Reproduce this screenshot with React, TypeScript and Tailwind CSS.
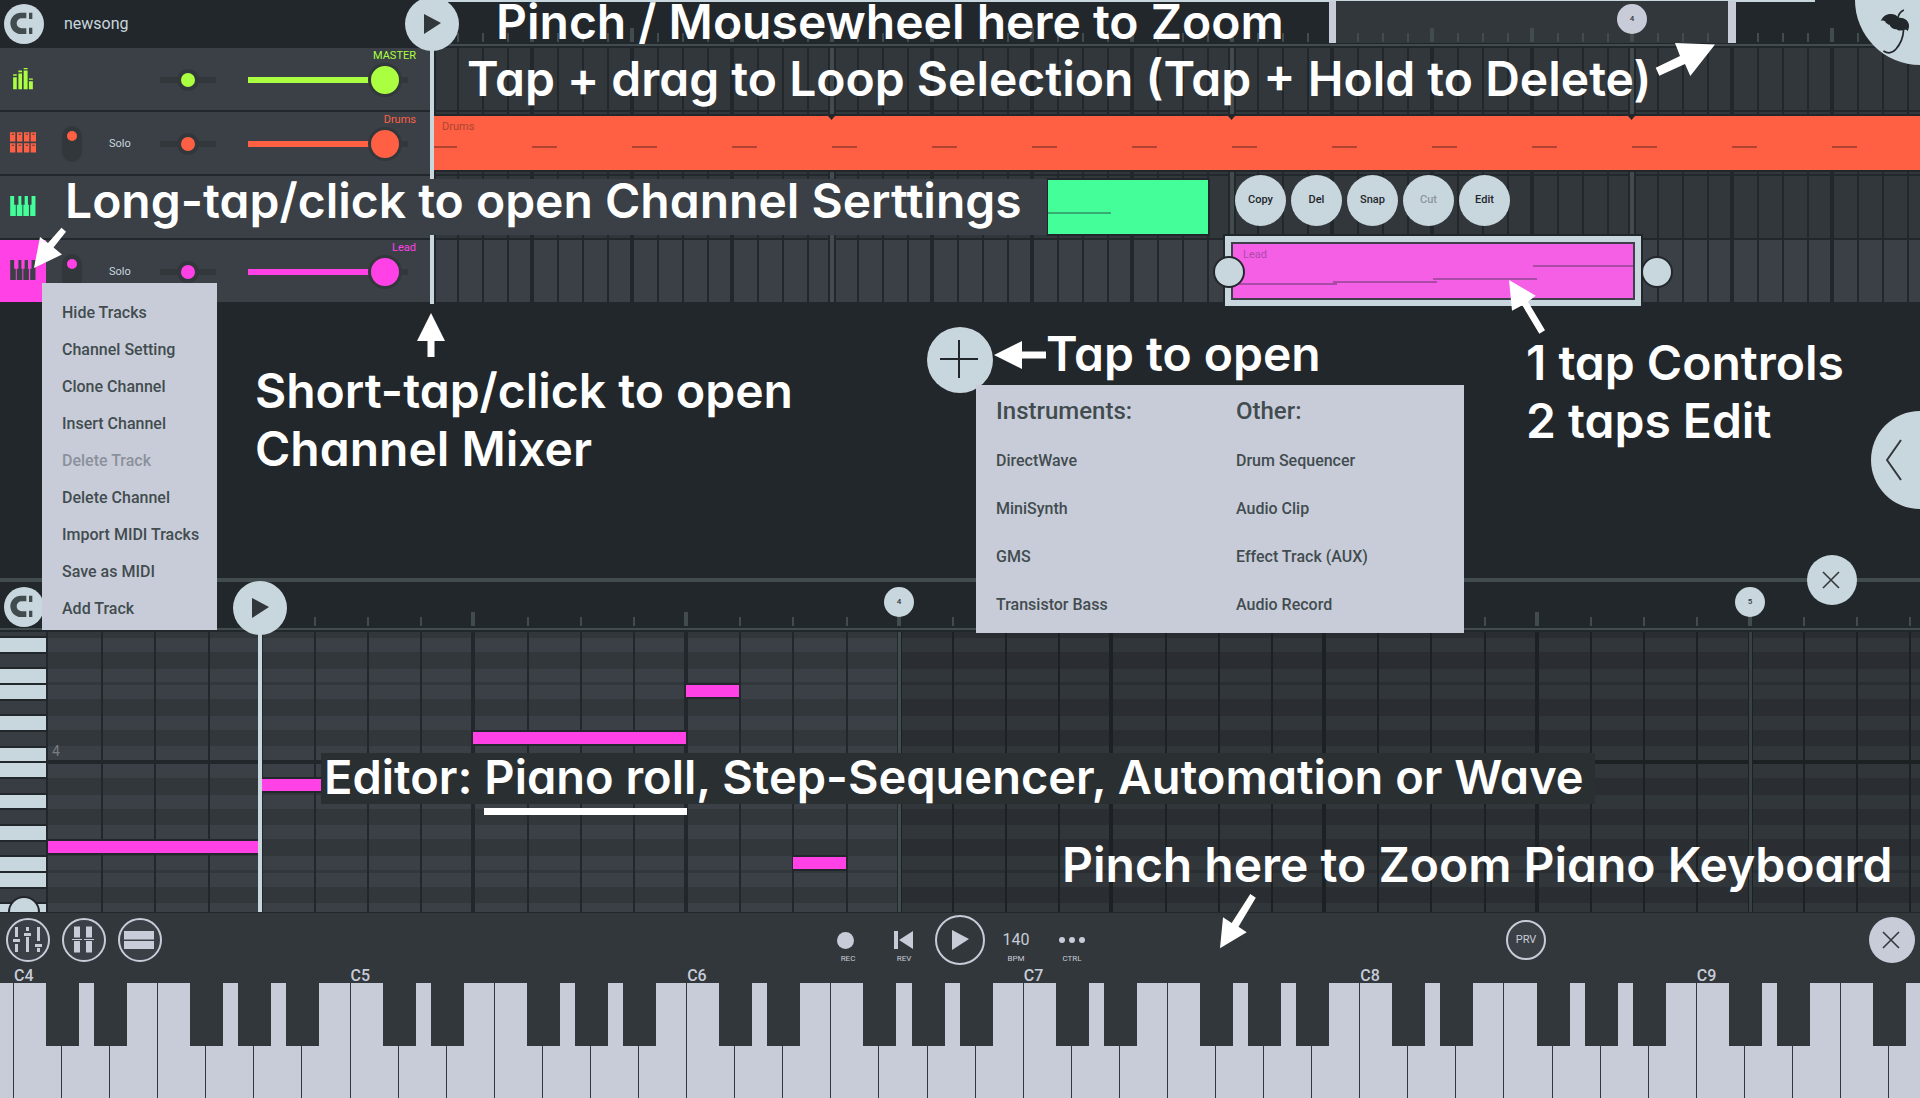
import type { ReactNode } from "react";
import clsx from "clsx";

type LaneColor = "lime" | "orange" | "green" | "pink";

const textColor: Record<LaneColor, string> = {
  lime: "text-[#aaff41]",
  orange: "text-[#ff6044]",
  green: "text-[#44ff99]",
  pink: "text-[#ff41e6]",
};

const channelMenu = [
  "Hide Tracks",
  "Channel Setting",
  "Clone Channel",
  "Insert Channel",
  "Delete Track",
  "Delete Channel",
  "Import MIDI Tracks",
  "Save as MIDI",
  "Add Track",
];

const modules = [
  { title: "Instruments:", items: ["DirectWave", "MiniSynth", "GMS", "Transistor Bass"] },
  { title: "Other:", items: ["Drum Sequencer", "Audio Clip", "Effect Track (AUX)", "Audio Record"] },
];

// Piano roll rows from G down to D, top to bottom
const pitchRows = ["G", "F#", "F", "E", "D#", "D", "C#", "C", "B", "A#", "A", "G#", "G", "F#", "F", "E", "D#", "D"];

const notes = [
  { row: 13, step: 0, length: 4 },
  { row: 9, step: 4, length: 2 },
  { row: 6, step: 8, length: 4 },
  { row: 3, step: 12, length: 1 },
  { row: 14, step: 14, length: 1 },
];

const STEP_VW = 2.77;
const TIMELINE_STEPS = 120;
const ROLL_STEPS = 36;

function MagnetIcon() {
  return (
    <svg viewBox="12 9 120 120" className="size-10" fill="#424c4f" aria-hidden="true">
      <path d="M79 35H63a32 32 0 0 0 0 64h16V82H65a15 15 0 0 1 0-30h14z" />
      <path d="M87 35h10v19H87zM87 80h10v19H87z" />
    </svg>
  );
}

function PlayIcon({ className }: { className?: string }) {
  return (
    <svg viewBox="0 0 17 20" className={clsx("h-5 w-[17px]", className)} fill="currentColor" aria-hidden="true">
      <path d="M0 0L17 9L0 20z" />
    </svg>
  );
}

function CrossIcon() {
  return (
    <svg viewBox="0 0 18 18" className="mr-0.5 size-[18px]" stroke="#32373b" strokeWidth="1.6" aria-hidden="true">
      <path d="M1 1L17 17M17 1L1 17" />
    </svg>
  );
}

function MasterIcon() {
  return (
    <svg viewBox="33 200 66 70" className="h-[23px] w-[22px]" fill="currentColor" aria-hidden="true">
      <path d="M36 231h11v37H36zM52 220h11v48H52zM68 211h12v57H68zM84 243h12v25H84z" />
      <path d="M36 222h11v5H36zM52 211h11v5H52zM68 203h12v4H68zM84 235h12v4H84z" />
    </svg>
  );
}

function DrumsIcon() {
  return (
    <svg viewBox="30 395 78 62" className="h-[21px] w-[26px]" fill="currentColor" aria-hidden="true">
      {[30, 51, 72, 92].map((x) => (
        <g key={x}>
          <path d={`M${x} 395h16v28h-16zM${x} 428h16v28h-16z`} />
          <path d={`M${x + 5} 400h7v3h-7zM${x + 5} 433h7v3h-7z`} fill="#3a4046" />
        </g>
      ))}
    </svg>
  );
}

function KeysIcon() {
  return (
    <svg viewBox="27 587 78 61" className="h-5 w-[26px]" fill="currentColor" aria-hidden="true">
      <path d="M27 587h12v27h5v34H27zM52 587h9v27h3v34H47v-34h5zM71 587h10v27h3v34H67v-34h4zM92 587h12v61H88v-34h4z" />
    </svg>
  );
}

function FruitIcon() {
  return (
    <svg viewBox="1320 28 92 134" className="h-[45px] w-[31px]" aria-hidden="true">
      <path
        d="M1322 64c6-14 16-21 30-21 11 0 19 4 23 11 16-2 29 7 31 21 1 8-1 14-4 19-2-4-5-5-8-4-4 2-6 3-10 1-5 2-11 1-15-3-7 1-13-2-17-7-2-1-3-3-3-6-4 0-6-2-8-4-3-1-5-3-5-6-6-3-10-3-14-1z"
        fill="#22272b"
      />
      <path d="M1391 31c-9 4-16 12-18 25" fill="none" stroke="#22272b" strokeWidth="5" />
      <path d="M1390 91c-1 20-9 41-23 57-10 11-24 13-37 5" fill="none" stroke="#22272b" strokeWidth="5" />
    </svg>
  );
}

function MixerIcon() {
  return (
    <svg viewBox="0 0 44 44" className="-m-0.5 size-11 shrink-0" fill="#c8ccd9" aria-hidden="true">
      <path d="M9 9h3v10H9zM9 26h3v8H9zM7 21h7v3H7zM20 9h3v4h-3zM20 19h3v15h-3zM18 15h7v3h-7zM31 9h3v14h-3zM31 30h3v4h-3zM29 26h7v3h-7z" />
    </svg>
  );
}

function RackIcon() {
  return (
    <svg viewBox="0 0 44 44" className="-m-0.5 size-11 shrink-0" fill="#c8ccd9" aria-hidden="true">
      <path d="M12 8.500h6v11h-6zM24 8.500h6v11h-6zM12 23h6v11.500h-6zM24 23h6v11.500h-6zM10 21h10v1H10zM22 21h10v1H22z" />
    </svg>
  );
}

function PanelsIcon() {
  return (
    <svg viewBox="0 0 44 44" className="-m-0.5 size-11 shrink-0" fill="#c8ccd9" aria-hidden="true">
      <path d="M6 13h30v8.500H6zM6 23h30v8H6z" />
    </svg>
  );
}

function Arrow({ box, points, className }: { box: string; points: string; className: string }) {
  return (
    <svg viewBox={box} className={clsx("pointer-events-none absolute", className)} fill="#fff" aria-hidden="true">
      <polygon points={points} />
    </svg>
  );
}

function Caption({ className, children }: { className: string; children: ReactNode }) {
  return (
    <p
      className={clsx(
        "pointer-events-none absolute font-['Inter',sans-serif] text-[48px] leading-[58px] font-semibold whitespace-nowrap text-white [font-feature-settings:'cv11']",
        className,
      )}
    >
      {children}
    </p>
  );
}

function BarMarker({ className, children }: { className: string; children: ReactNode }) {
  return (
    <span
      className={clsx(
        "absolute flex size-[30px] items-center justify-center rounded-full text-[8px] font-medium text-[#32373b]",
        className,
      )}
    >
      {children}
    </span>
  );
}

function ChannelControls({ name, muteable }: { name: string; muteable?: boolean }) {
  return (
    <div className="flex items-center pt-0.5">
      <div className="flex w-[114px] items-center">
        {muteable && (
          <>
            <button
              aria-label={`Mute ${name}`}
              className="ml-4 flex h-9 w-5 justify-center rounded-full bg-[#32373b] pt-[5px]"
            >
              <span className="size-[10px] rounded-full bg-current" />
            </button>
            <button className="ml-[27px] text-[11px] text-[#c8d6de]">Solo</button>
          </>
        )}
      </div>
      <input
        type="range"
        aria-label={`${name} pan`}
        defaultValue={50}
        className="h-[22px] w-14 appearance-none bg-transparent [&::-webkit-slider-runnable-track]:h-[6px] [&::-webkit-slider-runnable-track]:bg-[#32373b] [&::-webkit-slider-thumb]:-mt-2 [&::-webkit-slider-thumb]:size-[22px] [&::-webkit-slider-thumb]:appearance-none [&::-webkit-slider-thumb]:rounded-full [&::-webkit-slider-thumb]:border-4 [&::-webkit-slider-thumb]:border-[#32373b] [&::-webkit-slider-thumb]:bg-current"
      />
      <input
        type="range"
        aria-label={`${name} volume`}
        defaultValue={95}
        className="ml-8 h-[34px] w-40 appearance-none bg-transparent [&::-webkit-slider-runnable-track]:h-[6px] [&::-webkit-slider-runnable-track]:bg-[linear-gradient(to_right,currentColor_80%,#32373b_80%)] [&::-webkit-slider-thumb]:-mt-[14px] [&::-webkit-slider-thumb]:size-[34px] [&::-webkit-slider-thumb]:appearance-none [&::-webkit-slider-thumb]:rounded-full [&::-webkit-slider-thumb]:border-3 [&::-webkit-slider-thumb]:border-[#32373b] [&::-webkit-slider-thumb]:bg-current"
      />
      <span className="absolute top-px right-[14px] text-[11px] leading-[14px]">{name}</span>
    </div>
  );
}

function Channel({
  name,
  color,
  icon,
  selected,
  children,
}: {
  name: string;
  color: LaneColor;
  icon: ReactNode;
  selected?: boolean;
  children?: ReactNode;
}) {
  return (
    <div className={clsx("relative mb-0.5 flex h-[62px] items-center bg-[#3a4046]", textColor[color])}>
      <button
        aria-label={`${name} settings`}
        className={clsx(
          "flex h-full w-[46px] items-center justify-center pb-0.5",
          selected && "bg-[#ff41e6] text-[#3a4046]",
        )}
      >
        {icon}
      </button>
      {children}
    </div>
  );
}

function TimelineTicks() {
  return (
    <div className="absolute bottom-[4px] left-0.5 flex items-end">
      {Array.from({ length: TIMELINE_STEPS }, (_, i) => (
        <div key={i} className="w-[25px] shrink-0">
          <div className={i % 4 === 0 ? "-ml-0.5 h-[14px] w-1 bg-[#424c4f]" : "h-[9px] w-0.5 bg-[#424c4f]"} />
        </div>
      ))}
    </div>
  );
}

function TimelineLines() {
  return (
    <div className="absolute inset-y-0 left-0.5 flex">
      {Array.from({ length: TIMELINE_STEPS }, (_, i) => (
        <div key={i} className="w-[25px] shrink-0">
          <div
            className={clsx(
              "h-full",
              i % 16 === 0
                ? "-ml-1 w-2 border-x-2 border-[#22272b] bg-[#424c4f]"
                : i % 4 === 0
                  ? "-ml-0.5 w-1 bg-[#22272b]"
                  : "w-0.5 bg-[#22272b]",
            )}
          />
        </div>
      ))}
    </div>
  );
}

function Timeline() {
  return (
    <div className="relative min-w-0 flex-1 overflow-hidden pb-3">
      <div className="relative h-12 border-b-2 border-[#22272b]">
        <div className="absolute top-0 left-0 h-0.5 w-[1385px] bg-[#c8d6de]" />
        <div className="absolute top-px left-[899px] h-[42px] w-[407px] bg-[#32373b]" />
        <TimelineTicks />
        <div className="absolute top-px left-[899px] h-[42px] w-[407px] border-r-8 border-l-[7px] border-[#c8ccd9]" />
        <div className="absolute bottom-0 left-0 h-0.5 w-full bg-[#424c4f]" />
        <BarMarker className="top-1 left-[1187px] bg-[#c8ccd9]">4</BarMarker>
      </div>

      <div className="relative">
        <div className="mb-0.5 h-[62px] bg-[#32373b]" />
        <div className="mb-0.5 h-[62px] bg-[#32373b]" />
        <div className="mb-0.5 h-[62px] bg-[#32373b]" />
        <div className="h-[62px] bg-[#3a4046]" />
        <TimelineLines />

        <div className="absolute top-[68px] left-0 h-[54px] w-full overflow-hidden bg-[#ff6044] ring-2 ring-[#22272b]">
          <span className="absolute top-1 left-3 text-[11px] leading-[14px] text-[#a9452f]">Drums</span>
          <div className="absolute top-[30px] left-0.5 flex">
            {Array.from({ length: TIMELINE_STEPS / 4 }, (_, i) => (
              <div key={i} className="w-[100px] shrink-0">
                <div className="h-0.5 w-[25px] bg-[#b04430]" />
              </div>
            ))}
          </div>
          <svg className="absolute top-0 left-[398px] h-1 w-[820px]" viewBox="0 0 820 4" fill="#22272b" aria-hidden="true">
            <path d="M0 0h7l-3.500 4zM400 0h7l-3.500 4zM800 0h7l-3.500 4z" />
          </svg>
        </div>

        <div className="absolute top-[132px] left-[618px] h-[54px] w-[160px] bg-[#44ff99] ring-2 ring-[#22272b]">
          <div className="mt-8 h-0.5 w-[63px] bg-[#36ac70]" />
        </div>

        <div className="absolute top-[188px] left-[795px] h-[70px] w-[416px] border-6 border-[#c8d6de] ring-2 ring-[#22272b]">
          <div className="relative h-full border-2 border-[#3f3f4c] bg-[#f55fe6]">
            <span className="absolute top-1 left-[10px] text-[11px] leading-[14px] text-[#ab4ba8]">Lead</span>
            <div className="absolute top-[39px] left-0 h-0.5 w-[104px] bg-[#ab4ba8]" />
            <div className="absolute top-[37px] left-[100px] h-0.5 w-[104px] bg-[#ab4ba8]" />
            <div className="absolute top-[34px] left-[200px] h-0.5 w-[104px] bg-[#ab4ba8]" />
            <div className="absolute top-[21px] left-[300px] h-0.5 w-[100px] bg-[#ab4ba8]" />
          </div>
        </div>
        <span className="absolute top-[208px] left-[783px] size-8 rounded-full border-2 border-[#22272b] bg-[#c8d6de]" />
        <span className="absolute top-[208px] left-[1211px] size-8 rounded-full border-2 border-[#22272b] bg-[#c8d6de]" />

        <div className="absolute top-[127px] left-[805px] flex gap-[5px]">
          {["Copy", "Del", "Snap", "Cut", "Edit"].map((label) => (
            <button
              key={label}
              disabled={label === "Cut"}
              className="size-[51px] rounded-full bg-[#c8d6de] text-[11px] font-medium text-[#22272b] disabled:text-[#8d979d]"
            >
              {label}
            </button>
          ))}
        </div>
      </div>
    </div>
  );
}

function ChannelMenu() {
  return (
    <ul className="absolute top-[283px] left-[42px] w-[175px] bg-[#c8ccd9] pt-[11px] pb-[3px]">
      {channelMenu.map((item) => (
        <li key={item}>
          <button
            disabled={item === "Delete Track"}
            className="h-[37px] pl-5 text-left text-base font-medium whitespace-nowrap text-[#424c4f] disabled:text-[#8b919b]"
          >
            {item}
          </button>
        </li>
      ))}
    </ul>
  );
}

function ModulePicker() {
  return (
    <div className="absolute top-[385px] left-[976px] grid w-[488px] grid-cols-[240px_1fr] bg-[#c8ccd9] pb-1 pl-5 text-[#424c4f]">
      {modules.map((group) => (
        <section key={group.title}>
          <h2 className="text-2xl leading-[52px] font-medium">{group.title}</h2>
          <ul>
            {group.items.map((item) => (
              <li key={item}>
                <button className="h-12 text-base font-medium whitespace-nowrap">{item}</button>
              </li>
            ))}
          </ul>
        </section>
      ))}
    </div>
  );
}

function Arrangement() {
  return (
    <section className="relative z-20 min-h-[578px] flex-1">
      <div className="flex">
        <div className="w-[430px] shrink-0">
          <header className="flex h-12 items-center gap-5 pl-1">
            <button aria-label="Snap to grid" className="size-10 rounded-full bg-[#c8d6de]">
              <MagnetIcon />
            </button>
            <h1 className="text-base text-[#c8d6de]">newsong</h1>
          </header>
          <Channel name="MASTER" color="lime" icon={<MasterIcon />}>
            <ChannelControls name="MASTER" />
          </Channel>
          <Channel name="Drums" color="orange" icon={<DrumsIcon />}>
            <ChannelControls name="Drums" muteable />
          </Channel>
          <Channel name="Bass" color="green" icon={<KeysIcon />} />
          <Channel name="Lead" color="pink" icon={<KeysIcon />} selected>
            <ChannelControls name="Lead" muteable />
          </Channel>
        </div>
        <Timeline />
      </div>

      <div className="absolute top-10 left-[430px] h-[264px] w-1 bg-[#c8d6de]" />
      <button
        aria-label="Play from marker"
        className="absolute -top-[3px] left-[405px] flex size-[54px] items-center justify-center rounded-full bg-[#c8d6de]"
      >
        <PlayIcon className="text-[#32373b]" />
      </button>
      <button
        aria-label="Home"
        className="absolute -top-[65px] -right-[65px] size-[130px] rounded-full bg-[#c8d6de]"
      >
        <span className="absolute top-[74px] left-[25px]">
          <FruitIcon />
        </span>
      </button>
      <button
        aria-label="Show side panel"
        className="absolute top-[411px] right-0 flex h-[98px] w-[49px] items-center rounded-l-full bg-[#c8d6de] pl-[15px]"
      >
        <svg viewBox="0 0 16 42" className="h-[42px] w-4" fill="none" stroke="#32373b" strokeWidth="2" aria-hidden="true">
          <path d="M15 1L1 21L15 41" />
        </svg>
      </button>
      <button
        aria-label="Add track"
        className="absolute top-[327px] left-[927px] flex size-[66px] items-center justify-center rounded-full bg-[#c8d6de]"
      >
        <svg viewBox="0 0 38 38" className="mr-0.5 mb-0.5 size-[38px]" stroke="#22272b" strokeWidth="2" aria-hidden="true">
          <path d="M19 0V38M0 19H38" />
        </svg>
      </button>

      <Caption className="top-0 left-[496px] leading-[44px]!">Pinch / Mousewheel here to Zoom</Caption>
      <Caption className="top-[50px] left-[467px]">Tap + drag to Loop Selection (Tap + Hold to Delete)</Caption>
      <div className="absolute top-[179px] left-[60px] h-14 w-[987px] bg-[#3a4046]" />
      <Caption className="top-[172px] left-[65px]">Long-tap/click to open Channel Serttings</Caption>
      <Caption className="top-[362px] left-[255px]">
        Short-tap/click to open
        <br />
        Channel Mixer
      </Caption>
      <Caption className="top-[325px] left-[1046px]">Tap to open</Caption>
      <Caption className="top-[334px] left-[1526px]">
        1 tap Controls
        <br />2 taps Edit
      </Caption>

      <ChannelMenu />
      <ModulePicker />

      <Arrow
        className="top-[42px] left-[1655px] h-[36px] w-[62px]"
        box="1655 42 62 36"
        points="1715,44.600 1675,43 1680,56 1655.700,67.700 1659.300,75.700 1685,64 1690.300,76"
      />
      <Arrow
        className="top-[227px] left-[33px] h-[42px] w-[34px]"
        box="33 227 34 42"
        points="34,268 40,237 48,243 61.500,227.700 66,231.700 53.500,247.500 62,254.500"
      />
      <Arrow className="top-[313px] left-[417px] h-11 w-7" box="0 0 28 44" points="14,0 28,28 17.500,28 17.500,44 10.500,44 10.500,28 0,28" />
      <Arrow className="top-[341px] left-[994px] h-7 w-[52px]" box="0 0 52 28" points="0,14 28,0 28,10.500 52,10.500 52,17.500 28,17.500 28,28" />
      <Arrow
        className="top-[279px] left-[1508px] h-14 w-[38px]"
        box="1508 279 38 56"
        points="1509,280 1535.700,295.700 1528,301.700 1545,330.300 1539.300,333.700 1522.300,305.300 1512,310.700"
      />
    </section>
  );
}

function RollTicks() {
  return (
    <div className="absolute bottom-1 left-12 flex items-end">
      {Array.from({ length: ROLL_STEPS }, (_, i) => (
        <div key={i} className="w-[2.77vw] shrink-0">
          <div className={i % 4 === 0 ? "-ml-0.5 h-[14px] w-1 bg-[#424c4f]" : "h-[9px] w-0.5 bg-[#424c4f]"} />
        </div>
      ))}
    </div>
  );
}

function PianoRoll() {
  return (
    <div className="relative h-[280px] overflow-hidden">
      <div className="flex h-[286px]">
        <div className="flex w-12 flex-col border-r-2 border-[#22272b] bg-[#22272b]">
          <div className="h-1 bg-[#363b40]" />
          {pitchRows.map((pitch, i) => (
            <button
              key={i}
              aria-label={`Key ${pitch}`}
              className={clsx("w-full flex-1 border-t-2 border-[#22272b]", pitch.includes("#") ? "bg-[#383d43]" : "bg-[#c8d6de]")}
            />
          ))}
        </div>
        <div className="flex flex-1 flex-col">
          <div className="h-1 bg-[#32373b]" />
          {pitchRows.map((pitch, i) => (
            <div
              key={i}
              className={clsx(
                "flex-1 border-[#32373b] text-[14px] leading-[10px] text-[#777d81]",
                pitch.includes("#") ? "bg-[#32373b]" : "border-t-2 border-b bg-[#3a4046]",
                pitch === "C" && "border-b-2 border-b-[#22272b] pl-1",
                pitch === "B" && "border-t-[#22272b]",
              )}
            >
              {pitch === "C" && "4"}
            </div>
          ))}
        </div>
      </div>

      <div className="absolute inset-y-0 left-12 flex">
        {Array.from({ length: ROLL_STEPS }, (_, i) => (
          <div key={i} className="w-[2.77vw] shrink-0">
            {i > 0 && (
              <div
                className={clsx(
                  "h-full",
                  i % 16 === 0
                    ? "-ml-0.5 w-[5px] border-x border-[#22272b] bg-[#424c4f]"
                    : i % 4 === 0
                      ? "-ml-0.5 w-1 bg-[#22272b]"
                      : "w-0.5 bg-[#22272b]",
                )}
              />
            )}
          </div>
        ))}
      </div>
      <div className="absolute inset-y-0 right-0 bg-black/15" style={{ left: `calc(50px + ${16 * STEP_VW}vw)` }} />

      {notes.map((note) => (
        <div
          key={note.row}
          className="absolute h-4 border-y-2 border-[#22272b] bg-[#ff41e6]"
          style={{
            top: Math.floor(4 + (note.row * 282) / 18),
            left: `calc(48px + ${note.step * STEP_VW}vw)`,
            width: `${note.length * STEP_VW}vw`,
          }}
        />
      ))}
      <div className="absolute inset-y-0 w-1 bg-[#c8d6de]" style={{ left: `calc(45px + ${4 * STEP_VW}vw)` }} />
      <span className="absolute -bottom-4 left-2 size-8 rounded-full border-2 border-[#22272b] bg-[#c8d6de]" />
    </div>
  );
}

function Editor() {
  return (
    <section className="relative z-10">
      <div className="h-1 bg-[#424c4f]" />
      <div className="relative h-[50px] overflow-hidden border-b-2 border-[#22272b]">
        <RollTicks />
        <div className="absolute bottom-0 left-0 h-0.5 w-full bg-[#424c4f]" />
        <button aria-label="Snap notes" className="absolute top-[5px] left-1 size-10 rounded-full bg-[#c8d6de]">
          <MagnetIcon />
        </button>
        <BarMarker className="top-[5px] left-[884px] bg-[#c8d6de]">4</BarMarker>
        <BarMarker className="top-[5px] left-[1735px] bg-[#c8d6de]">5</BarMarker>
      </div>
      <PianoRoll />

      <button
        aria-label="Play editor"
        className="absolute top-[3px] left-[233px] flex size-[54px] items-center justify-center rounded-full bg-[#c8d6de]"
      >
        <PlayIcon className="text-[#32373b]" />
      </button>
      <button
        aria-label="Close editor"
        className="absolute -top-[23px] right-[63px] flex size-[50px] items-center justify-center rounded-full bg-[#c8d6de]"
      >
        <CrossIcon />
      </button>

      <div className="absolute top-[175px] left-[321px] h-[51px] w-[1274px] bg-[#2a2f32]" />
      <Caption className="top-[170px] left-[324px] text-[47px]!">
        Editor: Piano roll, Step-Sequencer, Automation or Wave
      </Caption>
      <div className="absolute top-[230px] left-[484px] h-[7px] w-[203px] bg-white" />
      <Caption className="top-[258px] left-[1062px]">Pinch here to Zoom Piano Keyboard</Caption>
      <Arrow
        className="top-[315px] left-[1219px] h-14 w-[38px]"
        box="1219 893 38 56"
        points="1220,948.300 1223,917.300 1231.700,923 1250.300,894 1255.800,897.700 1238.500,926.700 1246.700,932.300"
      />
    </section>
  );
}

function TransportItem({ label, children }: { label?: string; children: ReactNode }) {
  return (
    <button className="flex h-[53px] w-14 flex-col items-center pt-[14px] text-[#c8ccd9]">
      <span className="flex h-[26px] items-center">{children}</span>
      <span className="text-[8px] leading-[12px]">{label}</span>
    </button>
  );
}

function Toolbar() {
  return (
    <div className="grid h-[53px] grid-cols-[1fr_auto_1fr] items-center">
      <div className="flex gap-3 pl-[6px]">
        {[
          { label: "Mixer", icon: <MixerIcon /> },
          { label: "Rack", icon: <RackIcon /> },
          { label: "Panels", icon: <PanelsIcon /> },
        ].map(({ label, icon }) => (
          <button
            key={label}
            aria-label={label}
            className="flex size-11 items-center justify-center rounded-full border-2 border-[#c8ccd9] bg-[#3a4046]"
          >
            {icon}
          </button>
        ))}
      </div>

      <div className="flex">
        <TransportItem label="REC">
          <span className="mr-[6px] size-[17px] rounded-full bg-current" />
        </TransportItem>
        <TransportItem label="REV">
          <svg viewBox="0 0 19 18" className="mr-0.5 h-[18px] w-[19px]" fill="currentColor" aria-hidden="true">
            <path d="M0 0h4v18H0zM19 0v18L5 9z" />
          </svg>
        </TransportItem>
        <button aria-label="Play" className="flex w-14 items-center justify-center">
          <span className="flex size-[50px] items-center justify-center rounded-full border-2 border-[#c8ccd9] text-[#c8ccd9]">
            <PlayIcon />
          </span>
        </button>
        <TransportItem label="BPM">
          <span className="text-base leading-5">140</span>
        </TransportItem>
        <TransportItem label="CTRL">
          <span className="flex gap-1">
            <span className="size-[6px] rounded-full bg-current" />
            <span className="size-[6px] rounded-full bg-current" />
            <span className="size-[6px] rounded-full bg-current" />
          </span>
        </TransportItem>
      </div>

      <div className="flex items-center justify-end pr-[5px]">
        <button className="mr-[323px] size-10 rounded-full border-2 border-[#c8ccd9] bg-[#3a4046] pt-0.5 text-[11px] text-[#c8ccd9]">
          PRV
        </button>
        <button aria-label="Close keyboard" className="flex size-[46px] items-center justify-center rounded-full bg-[#c8ccd9]">
          <CrossIcon />
        </button>
      </div>
    </div>
  );
}

function Octave({ octave }: { octave: number }) {
  return (
    <div className="w-[17.53%] shrink-0">
      <div className="h-[17px] pl-px text-base leading-[19px] font-medium text-[#c8ccd9]">C{octave}</div>
      <div className="flex h-[115px]">
        {["C", "D", "E", "F", "G", "A", "B"].map((key) => (
          <div key={key} className="relative flex-1">
            <button aria-label={`${key}${octave}`} className="size-full border-l border-[#32373b] bg-[#c8ccd9]" />
            {key !== "E" && key !== "B" && (
              <button
                aria-label={`${key}#${octave}`}
                className="absolute top-0 -right-[18px] z-10 h-[63px] w-[33px] bg-[#32373b]"
              />
            )}
          </div>
        ))}
      </div>
    </div>
  );
}

export default function App() {
  return (
    <main className="relative flex h-screen min-h-[1098px] flex-col overflow-hidden bg-[#22272b] font-['Roboto',sans-serif]">
      <Arrangement />
      <Editor />
      <footer className="border-t border-[#22272b] bg-[#32373b]">
        <Toolbar />
        <div className="flex overflow-hidden">
          <div className="mt-[17px] h-[115px] w-[13px] shrink-0 bg-[#c8ccd9]" />
          {[4, 5, 6, 7, 8, 9].map((octave) => (
            <Octave key={octave} octave={octave} />
          ))}
        </div>
      </footer>
    </main>
  );
}
